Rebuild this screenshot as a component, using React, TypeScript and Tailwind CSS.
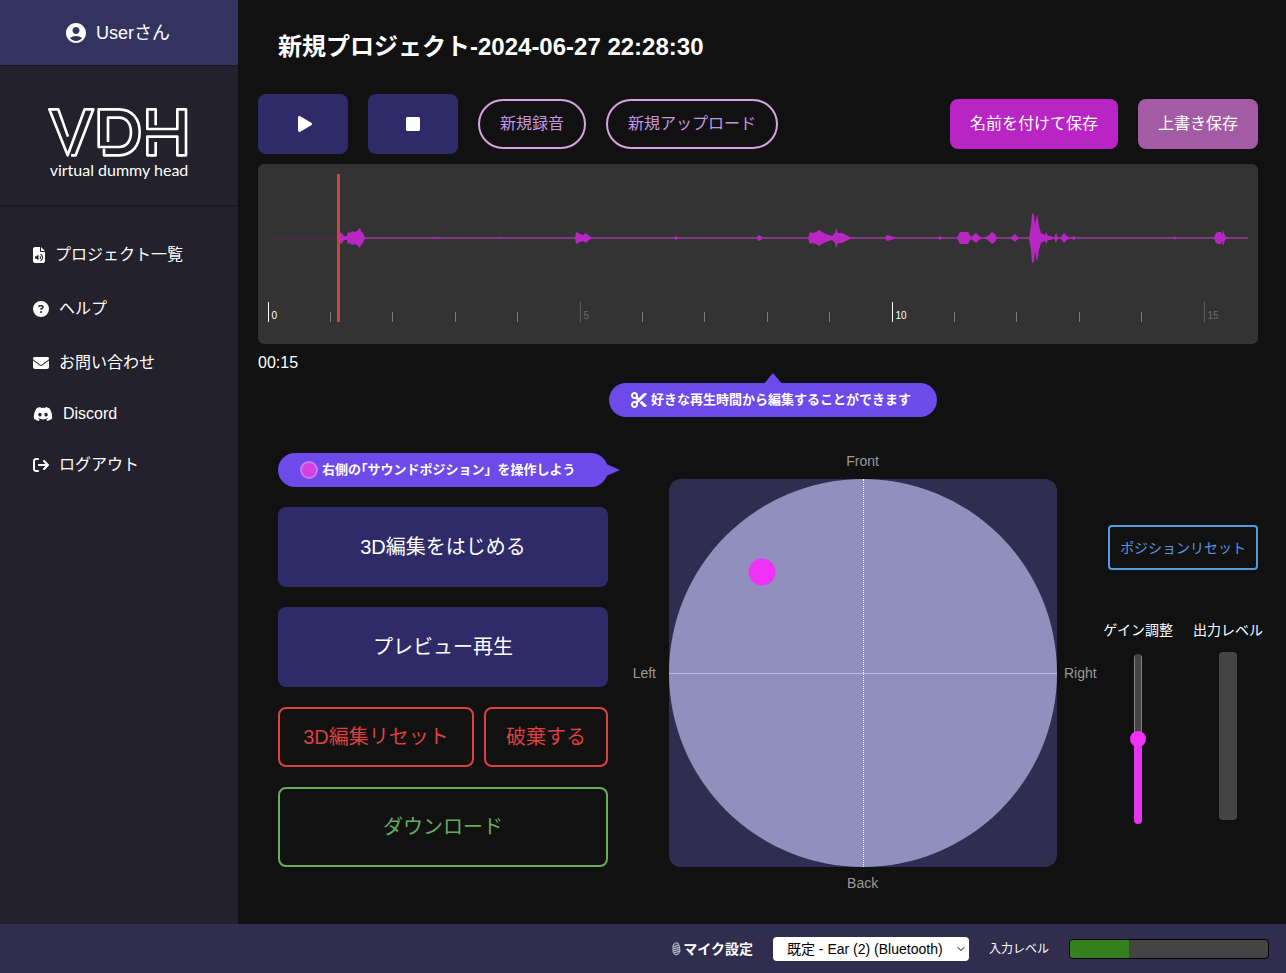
import { ReactNode, useState } from "react";
import { FaPlay, FaStop } from "react-icons/fa";
import {
    FaArrowRightFromBracket,
    FaCircleQuestion,
    FaDiscord,
    FaEnvelope,
    FaFileAudio,
    FaScissors,
} from "react-icons/fa6";
import { MdAccountCircle } from "react-icons/md";
import { ChevronDown } from "lucide-react";

type NavItem = {
    label: string;
    icon: ReactNode;
    className: string;
};

const navItems: NavItem[] = [
    { label: "プロジェクト一覧", icon: <FaFileAudio className="h-4 w-3" />, className: "h-[54px]" },
    { label: "ヘルプ", icon: <FaCircleQuestion className="size-4" />, className: "h-[54px]" },
    { label: "お問い合わせ", icon: <FaEnvelope className="size-4" />, className: "h-[54px]" },
    { label: "Discord", icon: <FaDiscord className="h-4 w-5" />, className: "h-12" },
    { label: "ログアウト", icon: <FaArrowRightFromBracket className="size-4" />, className: "h-[54px]" },
];

// [x, amplitude] pairs, mirrored around the center line
const peaks: [number, number][] = [
    [81, 0], [81, 6], [84, 5], [86, 2], [89, 2], [90, 6], [92, 5], [94, 7], [97, 6], [99, 7], [101, 9], [102, 10],
    [103, 7], [105, 5], [107, 0], [173, 0], [175, 1], [177, 0], [179, 1], [181, 0], [241, 0], [243, 1], [244, 0],
    [317, 0], [318, 6], [322, 4], [325, 3], [328, 5], [330, 3], [334, 0], [416, 0], [418, 2], [421, 0],
    [498, 0], [501, 3], [506, 0], [550, 0], [552, 6], [555, 5], [558, 6], [561, 8], [564, 6], [568, 4], [574, 2],
    [577, 5], [578, 10], [580, 5], [584, 5], [588, 3], [592, 1], [598, 0], [627, 0], [629, 3], [633, 2], [638, 0],
    [680, 0], [682, 2], [685, 0], [699, 0], [702, 6], [710, 6], [713, 1], [718, 5], [720, 3], [724, 0],
    [728, 1], [731, 3], [734, 6], [737, 4], [739, 0], [752, 0], [757, 4], [761, 0], [771, 0], [773, 12],
    [774, 25], [776, 24], [777, 13], [779, 24], [781, 12], [783, 5], [787, 3], [788, 6], [790, 2], [793, 2],
    [796, 0], [798, 5], [800, 0], [803, 1], [806, 5], [809, 2], [812, 0], [816, 2], [818, 0],
    [916, 0], [917, 2], [918, 0], [956, 0], [958, 5], [960, 6], [963, 6], [964, 3], [965, 8], [967, 2], [970, 0],
];

const seconds = Array.from({ length: 16 }, (_, i) => i);

const Logo = () => {
    return (
        <div className="flex h-[141px] flex-col items-center border-b-2 border-[#1a1a24] pt-10">
            <svg className="h-[52px] w-[144px]" viewBox="12 22 432 156" fill="none" stroke="white" strokeWidth="8" strokeLinejoin="round">
                <path d="M75 114 L46 32 H19 L74 170 L125 32 H151 L98 170 H84" />
                <path d="M183 150 V170 H228 C268 170 290 140 290 101 C290 62 268 32 228 32 H167 V145 H228 C252 145 264 125 264 101 C264 77 252 57 228 57 H195 V130" />
                <path d="M338 80 V32 H313 V91 H403 V32 H429 V170 H403 V114 H313 V170 H338 V130" />
            </svg>
            <p className="mt-0.5 font-[Lato] text-base leading-5 text-white">virtual dummy head</p>
        </div>
    );
};

const Sidebar = () => {
    return (
        <aside className="w-[238px] shrink-0 bg-[#22212c]">
            <div className="flex h-[66px] items-center justify-center gap-2 border-b border-[#1a1a24] bg-[#33335f] pr-1">
                <MdAccountCircle className="size-6" />
                <span className="text-lg">Userさん</span>
            </div>
            <Logo />
            <nav className="pt-[21px] pl-[33px]">
                <ul>
                    {navItems.map((item) => (
                        <li key={item.label} className={item.className}>
                            <a href="#" className="flex h-full items-center gap-2.5">
                                {item.icon}
                                <span>{item.label}</span>
                            </a>
                        </li>
                    ))}
                </ul>
            </nav>
        </aside>
    );
};

const Waveform = () => {
    const top = peaks.map(([x, a]) => `${x} ${74 - a}`);
    const bottom = peaks.map(([x, a]) => `${x} ${74 + a}`).reverse();

    return (
        <div className="mt-2.5 overflow-hidden rounded-md bg-[#333333]">
            <svg className="block w-full" viewBox="0 0 1000 180" role="img" aria-label="波形">
                <path d="M14 74 H80" stroke="#5a2748" strokeWidth="1" />
                <path d="M80 74 H990" stroke="#7c3a82" strokeWidth="2" />
                <polygon points={[...top, ...bottom].join(" ")} fill="#b826c4" />
                {seconds.map((s) => {
                    const x = Math.floor(10 + s * 62.4) + 0.5;
                    const major = s % 5 === 0;
                    const bright = s % 10 === 0;
                    return (
                        <g key={s}>
                            <path
                                d={`M${x} ${major ? 138 : 148} V158`}
                                stroke={bright ? "#ffffff" : major ? "#5c5c5c" : "#7d7d7d"}
                            />
                            {major && (
                                <text
                                    x={x + 3}
                                    y="155"
                                    fill={bright ? "#ffffff" : "#6a6a6a"}
                                    className="font-['Liberation_Sans'] text-[10px]"
                                >
                                    {s}
                                </text>
                            )}
                        </g>
                    );
                })}
                <path d="M80.5 10 V158" stroke="#cc453c" strokeWidth="3" />
            </svg>
        </div>
    );
};

const Toolbar = () => {
    return (
        <div className="mt-[29px] flex flex-wrap items-center gap-5">
            <button aria-label="再生" className="flex h-[60px] w-[90px] items-center justify-center rounded-lg bg-[#2e2b68] pl-1">
                <FaPlay className="h-4 w-3.5" />
            </button>
            <button aria-label="停止" className="flex h-[60px] w-[90px] items-center justify-center rounded-lg bg-[#2e2b68]">
                <FaStop className="h-4 w-3.5" />
            </button>
            <button className="h-[50px] rounded-full border-2 border-[#d2a5de] px-5 text-[#c497e0]">新規録音</button>
            <button className="h-[50px] rounded-full border-2 border-[#d2a5de] px-5 text-[#c497e0]">新規アップロード</button>
            <button className="ml-auto h-[50px] rounded-lg bg-[#b925c5] px-5">名前を付けて保存</button>
            <button className="h-[50px] rounded-lg bg-[#a35ba3] px-5">上書き保存</button>
        </div>
    );
};

const EditActions = () => {
    return (
        <div className="flex w-[330px] shrink-0 flex-col gap-5 text-xl">
            <div className="relative flex h-[34px] items-center gap-1 rounded-full bg-[#6d4aea] px-[22px] text-[13px] font-bold">
                <span className="size-[18px] rounded-full border-2 border-[#c77bf0] bg-[#d63fe0]" />
                <span>
                    右側の<span className="[font-feature-settings:'halt']">「</span>サウンドポジション」を操作しよう
                </span>
                <svg className="absolute top-2.5 -right-3 h-3.5 w-4" viewBox="0 0 16 14" fill="#6d4aea">
                    <path d="M0 0 L16 7 L0 14 Z" />
                </svg>
            </div>
            <button className="h-20 rounded-lg bg-[#2e2b68]">3D編集をはじめる</button>
            <button className="h-20 rounded-lg bg-[#2e2b68]">プレビュー再生</button>
            <div className="flex gap-2.5">
                <button className="h-[60px] flex-1 rounded-lg border-2 border-[#dc4040] text-[#dc4040]">3D編集リセット</button>
                <button className="h-[60px] rounded-lg border-2 border-[#dc4040] px-5 text-[#dc4040]">破棄する</button>
            </div>
            <button className="h-20 rounded-lg border-2 border-[#6aaa5f] text-[#6aaa5f]">ダウンロード</button>
        </div>
    );
};

const SoundPosition = () => {
    return (
        <div className="flex flex-1 justify-center pl-[18px] text-sm leading-4 text-[#999999]">
            <div className="grid grid-cols-[36px_388px_40px] content-start items-center">
                <span className="col-start-2 mb-2.5 text-center">Front</span>
                <span className="col-start-1">Left</span>
                <div className="relative aspect-square overflow-hidden rounded-xl bg-[#302e50]">
                    <div className="size-full rounded-full bg-[#908fbd]" />
                    <div className="absolute inset-y-0 left-1/2 border-l border-dotted border-white" />
                    <div className="absolute inset-x-0 top-1/2 border-t border-[#b9b8dc]" />
                    <button
                        aria-label="サウンドポジション"
                        className="absolute top-[24%] left-[24%] size-[27px] -translate-x-1/2 -translate-y-1/2 rounded-full bg-[#f032f8]"
                    />
                </div>
                <span className="text-right">Right</span>
                <span className="col-start-2 mt-2 text-center">Back</span>
            </div>
        </div>
    );
};

const Levels = () => {
    const [gain, setGain] = useState(50);

    return (
        <div className="flex shrink-0 flex-col items-center pt-[72px] text-sm">
            <button className="h-[45px] rounded border-2 border-[#5599e3] px-2.5 text-[#5599e3]">ポジションリセット</button>
            <div className="mt-[50px] flex gap-5">
                <div className="flex flex-col items-center gap-3.5">
                    <label htmlFor="gain">ゲイン調整</label>
                    <input
                        id="gain"
                        type="range"
                        value={gain}
                        onChange={(e) => setGain(Number(e.target.value))}
                        style={{
                            backgroundImage: `linear-gradient(to top, #e535f0 ${gain}%, transparent ${gain}%), linear-gradient(to right, #858585 1px, #444 1px, #444 7px, #858585 7px)`,
                        }}
                        className="h-[170px] w-2 appearance-none rounded-full [direction:rtl] [writing-mode:vertical-lr] [&::-webkit-slider-thumb]:size-4 [&::-webkit-slider-thumb]:appearance-none [&::-webkit-slider-thumb]:rounded-full [&::-webkit-slider-thumb]:bg-[#f032f8]"
                    />
                </div>
                <div className="flex flex-col items-center gap-3">
                    <span>出力レベル</span>
                    <div role="meter" aria-label="出力レベル" aria-valuenow={0} className="h-[168px] w-[18px] rounded bg-[#444444]" />
                </div>
            </div>
        </div>
    );
};

const Footer = () => {
    return (
        <footer className="flex h-[49px] items-center justify-end gap-5 bg-[#302d4e] pr-[17px]">
            <label htmlFor="mic" className="flex items-center gap-0.5 text-sm font-bold">
                <svg className="h-3.5 w-2.5" viewBox="0 0 10 14" fill="none" stroke="#b9b9c6">
                    <path d="M2 3 Q4 0 7 1 Q9 4 9 9 Q8 13 5 13 Q2 12 2 9 Z" fill="#55556a" />
                    <path d="M2 5 L8 3 M2 7 L9 5 M2 9 L9 7 M3 11 L9 9" />
                </svg>
                マイク設定
            </label>
            <div className="relative">
                <select id="mic" className="h-6 w-[196px] appearance-none rounded bg-white pl-3.5 text-sm text-black">
                    <option>既定 - Ear (2) (Bluetooth)</option>
                </select>
                <ChevronDown className="pointer-events-none absolute top-1.5 right-0.5 size-3 text-black" />
            </div>
            <span className="text-xs">入力レベル</span>
            <div
                role="meter"
                aria-label="入力レベル"
                aria-valuenow={30}
                className="h-5 w-[200px] overflow-hidden rounded border border-black bg-[#444444]"
            >
                <div className="h-full w-[30%] bg-[#33801f]" />
            </div>
        </footer>
    );
};

const App = () => {
    return (
        <div className="flex min-h-screen flex-col bg-[#111111] font-['Liberation_Sans','Noto_Sans_CJK_JP',sans-serif] text-white">
            <div className="flex flex-1">
                <Sidebar />
                <main className="min-w-0 flex-1 pt-[29px] pr-7 pb-8 pl-5">
                    <h1 className="pl-5 text-2xl leading-9 font-bold">新規プロジェクト-2024-06-27 22:28:30</h1>
                    <Toolbar />
                    <Waveform />
                    <p className="mt-[7px]">00:15</p>
                    <div className="mt-2 flex justify-center pl-[30px]">
                        <div className="relative flex h-[34px] items-center gap-1 rounded-full bg-[#6d4aea] pr-[26px] pl-[22px] text-[13px] font-bold">
                            <svg className="absolute -top-2.5 left-1/2 h-3 w-5 -translate-x-1/2" viewBox="0 0 20 12" fill="#6d4aea">
                                <path d="M0 12 L10 0 L20 12 Z" />
                            </svg>
                            <FaScissors className="size-4" />
                            <span>好きな再生時間から編集することができます</span>
                        </div>
                    </div>
                    <div className="mt-9 -mr-[5px] flex pl-5">
                        <EditActions />
                        <SoundPosition />
                        <Levels />
                    </div>
                </main>
            </div>
            <Footer />
        </div>
    );
};

export default App;
